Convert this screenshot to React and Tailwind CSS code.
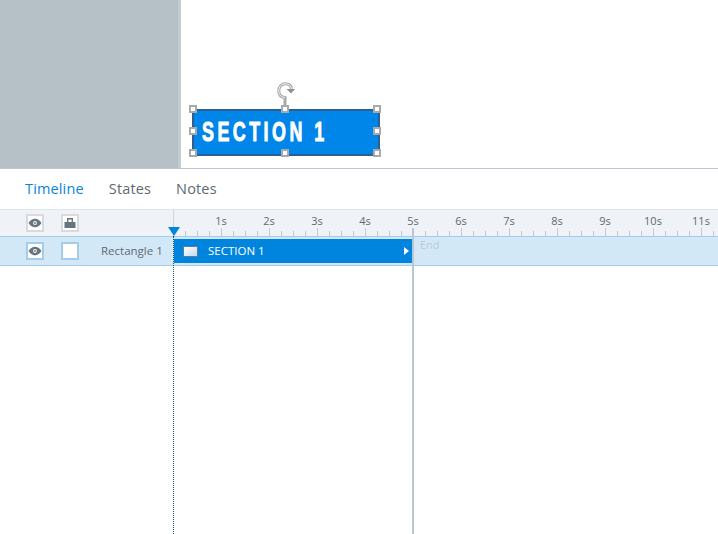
const ticks = Array.from({ length: 45 }, (_, i) => i + 1);
const seconds = [1, 2, 3, 4, 5, 6, 7, 8, 9, 10, 11];

function Eye() {
  return (
    <svg width="14" height="10" viewBox="0 0 14 10">
      <path d="M0.5 5C2.5 1.8 4.6 0.8 7 0.8S11.5 1.8 13.5 5C11.5 8.2 9.4 9.2 7 9.2S2.5 8.2 0.5 5Z" fill="#66757f" />
      <circle cx="7" cy="5" r="1.9" fill="#ffffff" />
      <circle cx="7" cy="5" r="0.9" fill="#66757f" />
    </svg>
  );
}

function Lock() {
  return (
    <svg width="12" height="12" viewBox="0 0 12 12">
      <path d="M3 5V1H9V5H7.600V2.400H4.400V5Z" fill="#66757f" />
      <rect x="0.500" y="5" width="11" height="6" fill="#66757f" />
    </svg>
  );
}

function Handle({ className }) {
  return <div className={`absolute w-[8px] h-[8px] bg-white border-2 border-[#a9a9a9] ${className}`} />;
}

function IconBox({ className, children }) {
  return <div className={`w-[18px] h-[18px] flex items-center justify-center border-2 ${className}`}>{children}</div>;
}

export default function App() {
  return (
    <div className="relative w-[718px] h-[534px] overflow-hidden bg-white font-['Open_Sans','Noto_Sans',sans-serif]">
      <div className="flex h-[169px] border-b border-[#bcc3d3]">
        <div className="w-[181px] bg-[#b6c1c7] border-r-[3px] border-[#c3ccd1]" />
        <div className="relative flex-1 bg-white">
          <div className="absolute left-[11px] top-[109px] w-[188px] h-[47px] bg-[#0085e8] border-2 border-[#2a5f94] flex items-center pl-[8px]">
            <span className="inline-block origin-left scale-x-[0.64] font-['Liberation_Sans'] font-bold text-[28px] leading-none tracking-[5.4px] text-white [-webkit-text-stroke:1px_white] whitespace-nowrap -translate-y-[1px]">
              SECTION 1
            </span>
          </div>
          <svg className="absolute left-[96px] top-[82px]" width="20" height="24" viewBox="0 0 20 24" fill="none">
            <path d="M8 24V15.500C3.800 15 1.800 12.500 1.800 9C1.800 4.700 4.500 1.800 8.500 1.800C12 1.800 14.200 4 14.500 7" stroke="#a9a9a9" strokeWidth="3" />
            <path d="M8 15.500C3.800 15 1.800 12.500 1.800 9C1.800 4.700 4.500 1.800 8.500 1.800C12 1.800 14.200 4 14.500 7" stroke="#f4f4f4" strokeWidth="1" />
            <path d="M9.500 7H18L14 11.500Z" fill="#8f8f8f" />
          </svg>
          <Handle className="left-[8px] top-[105px]" />
          <Handle className="left-[100px] top-[105px]" />
          <Handle className="left-[192px] top-[105px]" />
          <Handle className="left-[8px] top-[127px]" />
          <Handle className="left-[192px] top-[127px]" />
          <Handle className="left-[8px] top-[149px]" />
          <Handle className="left-[100px] top-[149px]" />
          <Handle className="left-[192px] top-[149px]" />
        </div>
      </div>

      <div className="flex items-center h-[40px] pl-[25px] gap-[25px] text-[14.5px] tracking-[0.15px]">
        <span className="text-[#0a84d8]">Timeline</span>
        <span className="text-[#5e6a73]">States</span>
        <span className="text-[#5e6a73]">Notes</span>
      </div>

      <div className="flex h-[27px] bg-[#eff3f7] border-t border-[#dfe4e9]">
        <div className="w-[174px] flex items-center pl-[26px] gap-[17px] border-r border-[#ced5db]">
          <IconBox className="border-[#d8dadc] bg-white"><Eye /></IconBox>
          <IconBox className="border-[#d8dadc] bg-white"><Lock /></IconBox>
        </div>
        <div className="relative flex-1 text-[11px] text-[#5e6a73]">
          {seconds.map((s) => (
            <span key={s} style={{ left: s * 48 - 23 }} className="absolute top-[2px] w-[44px] text-center leading-[18px]">
              {s}s
            </span>
          ))}
          <svg className="absolute left-0 bottom-0" width="544" height="8" viewBox="0 0 544 8">
            {ticks.map((i) => (
              <rect key={i} x={i * 12 - 1} y={i % 4 === 0 ? 0 : 3} width="1" height={i % 4 === 0 ? 8 : 5} fill="#c2cbd3" />
            ))}
          </svg>
        </div>
      </div>

      <div className="flex h-[30px] bg-[#d3e8f7] border-t border-[#a4cce9] border-b">
        <div className="w-[174px] flex items-center pl-[26px] gap-[17px]">
          <IconBox className="border-[#a4cce9] bg-white"><Eye /></IconBox>
          <IconBox className="border-[#a4cce9] bg-white" />
          <span className="ml-[5px] text-[11.5px] text-[#5e6a73] whitespace-nowrap">Rectangle 1</span>
        </div>
        <div className="w-[238px] mt-[2px] h-[24px] bg-[#0085de] flex items-center pl-[9px] text-white text-[11.5px]">
          <div className="w-[15px] h-[11px] border border-[#5a7d98] bg-gradient-to-br from-[#ffffff] to-[#c3daf0]" />
          <span className="ml-[10px]">SECTION 1</span>
          <span className="ml-auto mr-[3px] w-0 h-0 border-y-[4px] border-y-transparent border-l-[5px] border-l-white" />
        </div>
        <span className="ml-[8px] text-[11px] leading-[16px] text-[#bccad5]">End</span>
      </div>

      <div className="absolute left-[173px] top-[236px] h-[298px] border-l border-dotted border-[#1f4f74]" />
      <div className="absolute left-[412px] top-[228px] w-[2px] h-[306px] bg-[#b8c7d3]" />
      <div className="absolute left-[168px] top-[227px] w-0 h-0 border-x-[6px] border-x-transparent border-t-[9px] border-t-[#0085de]" />
    </div>
  );
}
